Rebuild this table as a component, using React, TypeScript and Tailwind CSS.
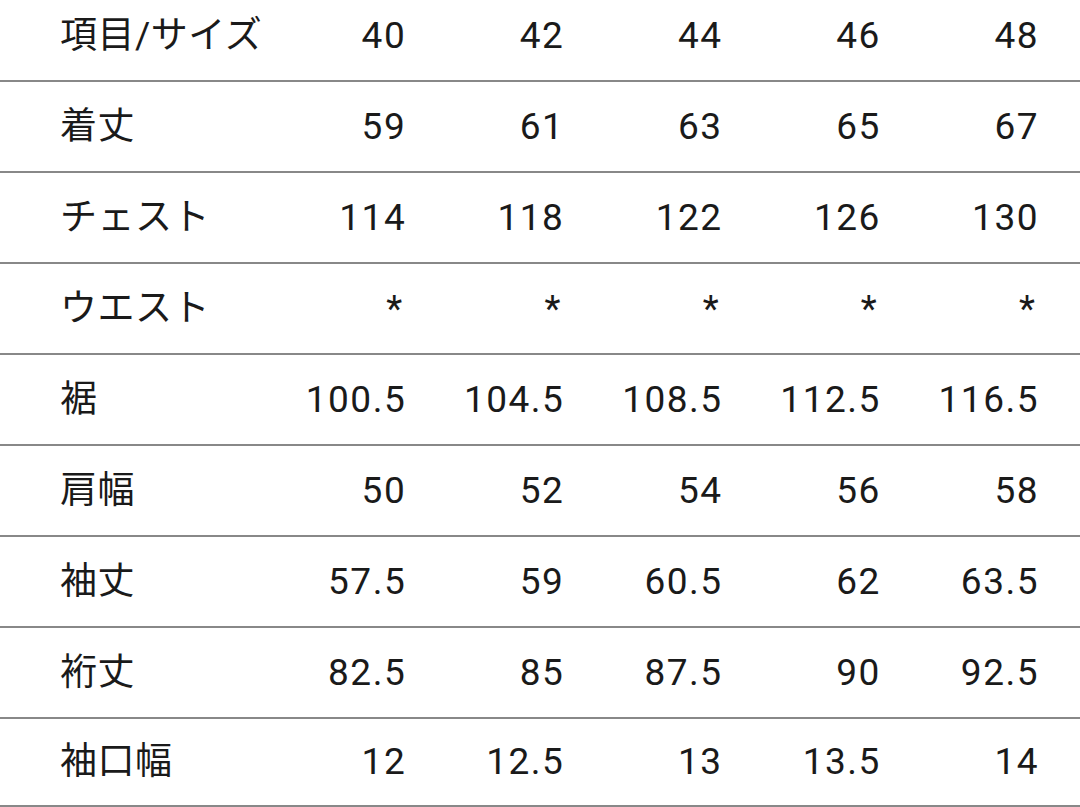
const sizes = ["40", "42", "44", "46", "48"];

const rows: { label: string; values: string[] }[] = [
  { label: "着丈", values: ["59", "61", "63", "65", "67"] },
  { label: "チェスト", values: ["114", "118", "122", "126", "130"] },
  { label: "ウエスト", values: ["*", "*", "*", "*", "*"] },
  { label: "裾", values: ["100.5", "104.5", "108.5", "112.5", "116.5"] },
  { label: "肩幅", values: ["50", "52", "54", "56", "58"] },
  { label: "袖丈", values: ["57.5", "59", "60.5", "62", "63.5"] },
  { label: "裄丈", values: ["82.5", "85", "87.5", "90", "92.5"] },
  { label: "袖口幅", values: ["12", "12.5", "13", "13.5", "14"] },
];

function Row({ label, values, last }: { label: string; values: string[]; last?: boolean }) {
  return (
    <div
      className={
        last
          ? "grid grid-cols-[188px_repeat(5,1fr)] items-center h-[88px] border-b-2 border-[#888888] pl-[60px] pr-[41px]"
          : "grid grid-cols-[188px_repeat(5,1fr)] items-center h-[91px] border-b-2 border-[#888888] pl-[60px] pr-[41px]"
      }
    >
      <div className="whitespace-nowrap tracking-[0.5px]">{label}</div>
      {values.map((v, i) =>
        v === "*" ? (
          <div key={i} className="text-right pr-[4px]">
            {v}
          </div>
        ) : (
          <div key={i} className="text-right tracking-[1.5px]">
            {v}
          </div>
        )
      )}
    </div>
  );
}

export default function App() {
  return (
    <div className="w-[1080px] h-[807px] overflow-hidden bg-white">
      <div
        className="-mt-[9px] text-[37px] text-[#1a1a1a]"
        style={{ fontFamily: 'Roboto, "Noto Sans CJK JP", sans-serif' }}
      >
        <Row label="項目/サイズ" values={sizes} />
        {rows.map((r, i) => (
          <Row key={r.label} label={r.label} values={r.values} last={i === rows.length - 1} />
        ))}
      </div>
    </div>
  );
}
